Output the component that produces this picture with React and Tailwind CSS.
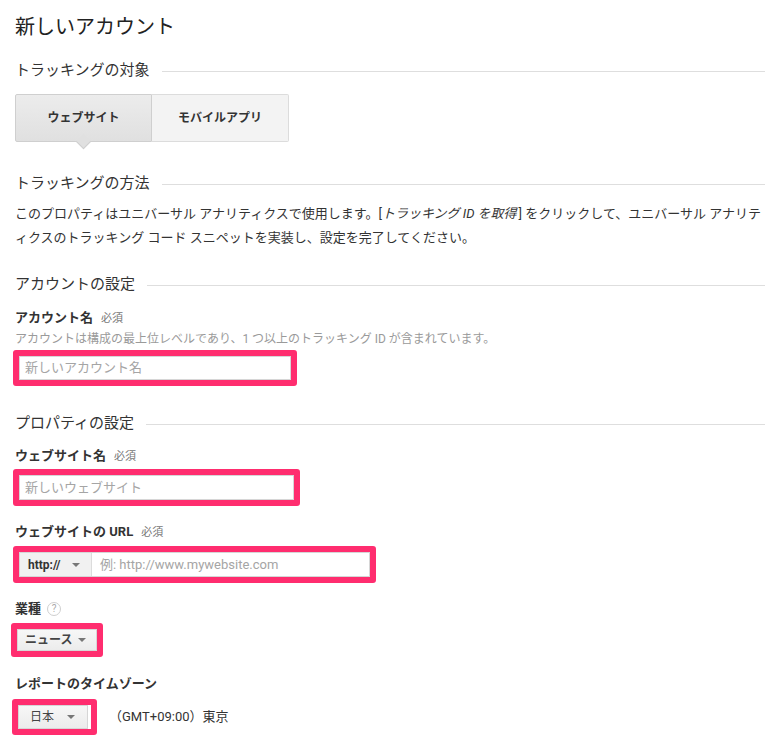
import React from 'react';

function SectionHeader({ title, className = '' }) {
  return (
    <div className={`flex items-center text-[15px] leading-[20px] text-[#333] ${className}`}>
      <span>{title}</span>
      <div className="flex-1 h-px bg-[#dedede] ml-3 mt-[3px]" />
    </div>
  );
}

function Label({ text, required, className = '' }) {
  return (
    <div className={`flex items-baseline text-[13px] leading-[20px] font-bold text-[#333] ${className}`}>
      <span>{text}</span>
      {required && <span className="ml-2 text-[11px] font-normal text-[#777]">必須</span>}
    </div>
  );
}

function Caret() {
  return <span className="inline-block w-0 h-0 border-l-[4px] border-r-[4px] border-t-[4px] border-l-transparent border-r-transparent border-t-[#777]" />;
}

function SelectBtn({ text, className = '' }) {
  return (
    <div className={`flex items-center justify-between bg-gradient-to-b from-[#f7f7f7] to-[#ececec] border border-[#d6d6d6] text-[12px] text-[#444] ${className}`}>
      <span>{text}</span>
      <Caret />
    </div>
  );
}

export default function App() {
  return (
    <div
      className="w-[781px] min-h-[744px] bg-white pl-[15px] pr-[16px] text-[#333]"
      style={{ fontFamily: '"Roboto", "Noto Sans CJK JP", sans-serif' }}
    >
      <h1 className="pt-[13px] text-[20px] leading-[28px] font-normal text-[#222]">新しいアカウント</h1>

      <SectionHeader title="トラッキングの対象" className="mt-[19px]" />

      <div className="mt-[14px] flex w-[274px] h-[48px]">
        <div className="relative w-[137px] flex items-center justify-center bg-gradient-to-b from-[#ececec] to-[#e0e0e0] border border-[#cfcfcf] rounded-l-[2px] text-[12px] font-bold text-[#333]">
          ウェブサイト
          <span className="absolute left-1/2 -bottom-[6px] -ml-[6px] w-[11px] h-[11px] rotate-45 bg-[#e0e0e0] border-r border-b border-[#cfcfcf]" />
        </div>
        <div className="w-[137px] flex items-center justify-center bg-[#f3f3f3] border border-l-0 border-[#dcdcdc] rounded-r-[2px] text-[12px] font-bold text-[#333]">
          モバイルアプリ
        </div>
      </div>

      <SectionHeader title="トラッキングの方法" className="mt-[31px]" />

      <p className="mt-[9px] text-[13px] leading-[24px] text-[#333]">
        このプロパティはユニバーサル アナリティクスで使用します。[<i className="pr-[2px]">トラッキング ID を取得</i>] をクリックして、ユニバーサル アナリティクスのトラッキング コード スニペットを実装し、設定を完了してください。
      </p>

      <SectionHeader title="アカウントの設定" className="mt-[24px]" />

      <Label text="アカウント名" required className="mt-[14px]" />
      <div className="text-[12px] leading-[20px] text-[#9a9a9a]">
        アカウントは構成の最上位レベルであり、1 つ以上のトラッキング ID が含まれています。
      </div>
      <div className="mt-[1px] -ml-[2px] w-[284px] h-[36px] border-[6px] border-[#ff2d6f] rounded-[3px] flex">
        <div className="flex-1 flex items-center border border-[#d6d6d6] px-[5px] text-[13px] text-[#a5a5a5]">
          新しいアカウント名
        </div>
      </div>

      <SectionHeader title="プロパティの設定" className="mt-[27px]" />

      <Label text="ウェブサイト名" required className="mt-[13px]" />
      <div className="mt-[2px] -ml-[2px] w-[287px] h-[37px] border-[6px] border-[#ff2d6f] rounded-[3px] flex">
        <div className="flex-1 flex items-center border border-[#d6d6d6] px-[5px] text-[13px] text-[#a5a5a5]">
          新しいウェブサイト
        </div>
      </div>

      <Label text="ウェブサイトの URL" required className="mt-[16px]" />
      <div className="mt-[3px] -ml-[2px] w-[363px] h-[37px] border-[6px] border-[#ff2d6f] rounded-[3px] flex">
        <div className="flex-1 flex border border-[#d6d6d6]">
          <div className="w-[72px] flex items-center justify-between bg-[#f1f1f1] border-r border-[#dcdcdc] pl-[8px] pr-[11px] text-[12px] font-bold text-[#333]">
            <span>http://</span>
            <Caret />
          </div>
          <div className="flex-1 flex items-center px-[8px] text-[13px] text-[#a5a5a5]">例: http://www.mywebsite.com</div>
        </div>
      </div>

      <div className="mt-[16px] flex items-center text-[13px] leading-[20px] font-bold text-[#333]">
        <span>業種</span>
        <span className="ml-[6px] w-[14px] h-[14px] rounded-full border border-[#cfcfcf] flex items-center justify-center text-[10px] font-normal text-[#aaa]">?</span>
      </div>
      <div className="mt-[4px] -ml-[4px] w-[92px] h-[34px] border-[6px] border-[#ff2d6f] rounded-[3px] flex">
        <SelectBtn text="ニュース" className="flex-1 pl-[7px] pr-[10px] font-semibold" />
      </div>

      <div className="mt-[17px] text-[13px] leading-[20px] font-bold text-[#333]">レポートのタイムゾーン</div>
      <div className="mt-[5px] flex items-center">
        <div className="-ml-[3px] w-[85px] h-[36px] border-[6px] border-[#ff2d6f] rounded-[3px] bg-white flex pr-[3px]">
          <SelectBtn text="日本" className="flex-1 pl-[11px] pr-[12px]" />
        </div>
        <span className="ml-[12px] text-[13px] text-[#333]">（GMT+09:00）東京</span>
      </div>
    </div>
  );
}
